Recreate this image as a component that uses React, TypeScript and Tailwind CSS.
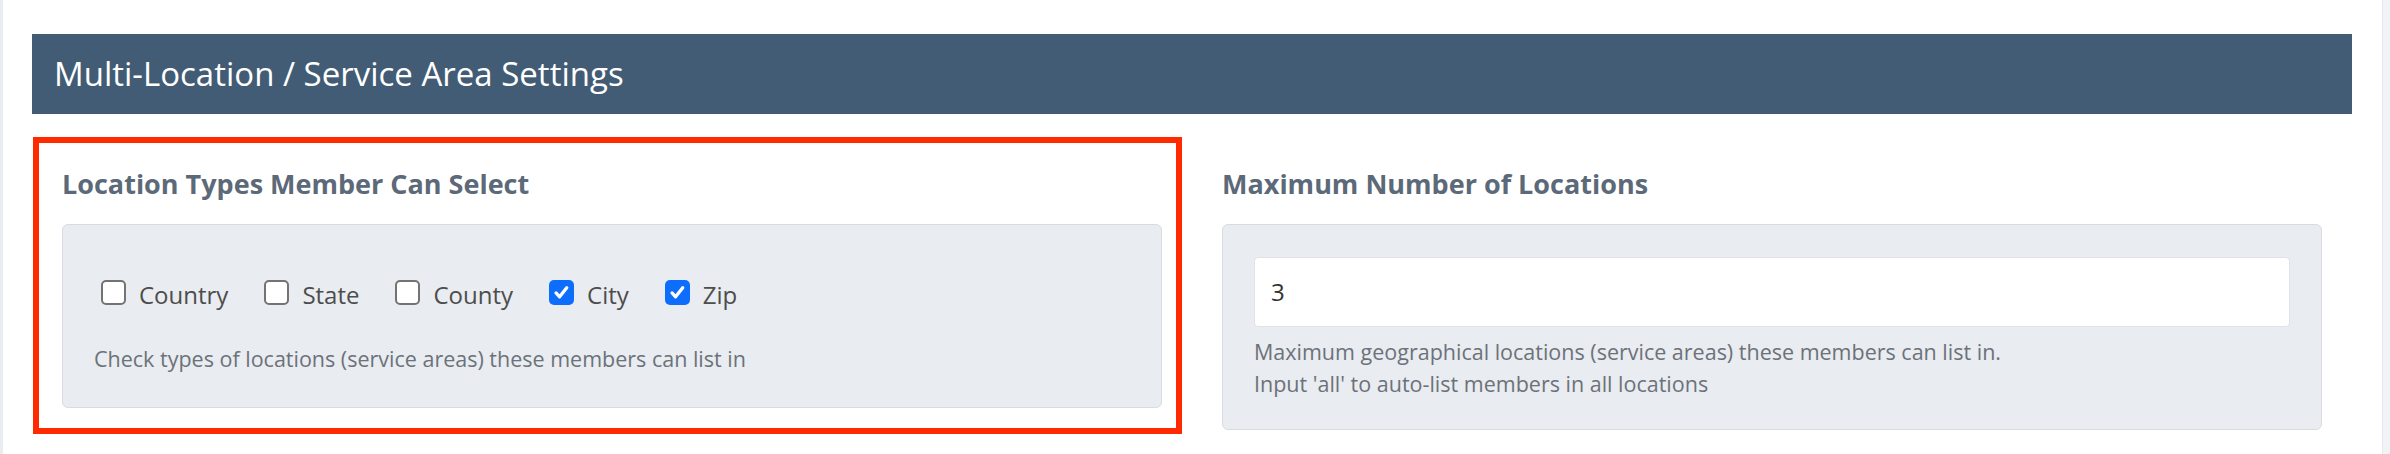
import React from 'react';

type Loc = { label: string; checked: boolean };

const locations: Loc[] = [
  { label: 'Country', checked: false },
  { label: 'State', checked: false },
  { label: 'County', checked: false },
  { label: 'City', checked: true },
  { label: 'Zip', checked: true },
];

const Box: React.FC<{ checked: boolean }> = ({ checked }) =>
  checked ? (
    <span className="flex h-[25px] w-[25px] shrink-0 items-center justify-center rounded-[5px] bg-[#0d6efd]">
      <svg width="19" height="19" viewBox="0 0 16 16" fill="none">
        <path d="M3.4 8.4l3 3.2 6-7.6" stroke="white" strokeWidth="2.8" strokeLinecap="round" strokeLinejoin="round" />
      </svg>
    </span>
  ) : (
    <span className="h-[25px] w-[25px] shrink-0 rounded-[5px] border-2 border-[#737373] bg-white" />
  );

const App: React.FC = () => {
  return (
    <div className="flex h-[454px] w-[2390px] bg-white font-['Open_Sans',sans-serif]">
      <div className="w-[3px] bg-[#e9edf2]" />
      <div className="flex-1 pl-[29px] pr-[30px] pt-[34px]">
        <div className="flex h-[80px] items-center bg-[#425c75] px-[22px] text-[33px] text-white">
          Multi-Location / Service Area Settings
        </div>
        <div className="grid grid-cols-2">
          <div className="relative px-[30px] pt-[54px]">
            <div className="absolute left-[1px] top-[23px] h-[297px] w-[1149px] border-[6px] border-[#ff2a00]" />
            <h3 className="text-[27px] font-bold leading-[32px] text-[#5c6978]">Location Types Member Can Select</h3>
            <div className="mt-[24px] h-[184px] rounded-[6px] border border-[#d8dce1] bg-[#e9ecf0] px-[31px] pt-[32px]">
              <div className="flex h-[70px] items-center pl-[7px]">
                {locations.map((l) => (
                  <label key={l.label} className="mr-[36px] flex items-center gap-[13px] text-[24px] text-[#4d4d4d]">
                    <Box checked={l.checked} />
                    <span className="mt-[6px]">{l.label}</span>
                  </label>
                ))}
              </div>
              <p className="mt-[16px] text-[21.5px] leading-[32px] text-[#6c727a]">
                Check types of locations (service areas) these members can list in
              </p>
            </div>
          </div>
          <div className="px-[30px] pt-[54px]">
            <h3 className="text-[27px] font-bold leading-[32px] text-[#5c6978]">Maximum Number of Locations</h3>
            <div className="mt-[24px] h-[206px] rounded-[6px] border border-[#d8dce1] bg-[#e9ecf0] px-[31px] pt-[32px]">
              <div className="flex h-[70px] items-center rounded-[4px] border border-[#dfe3e8] bg-white px-[16px] text-[24px] text-[#333]">
                3
              </div>
              <p className="mt-[9px] text-[21.5px] leading-[32px] text-[#6c727a]">
                Maximum geographical locations (service areas) these members can list in.
                <br />
                Input 'all' to auto-list members in all locations
              </p>
            </div>
          </div>
        </div>
      </div>
      <div className="w-[8px] border-l border-[#e6e9ee] bg-[#f1f3f6]" />
    </div>
  );
};

export default App;
